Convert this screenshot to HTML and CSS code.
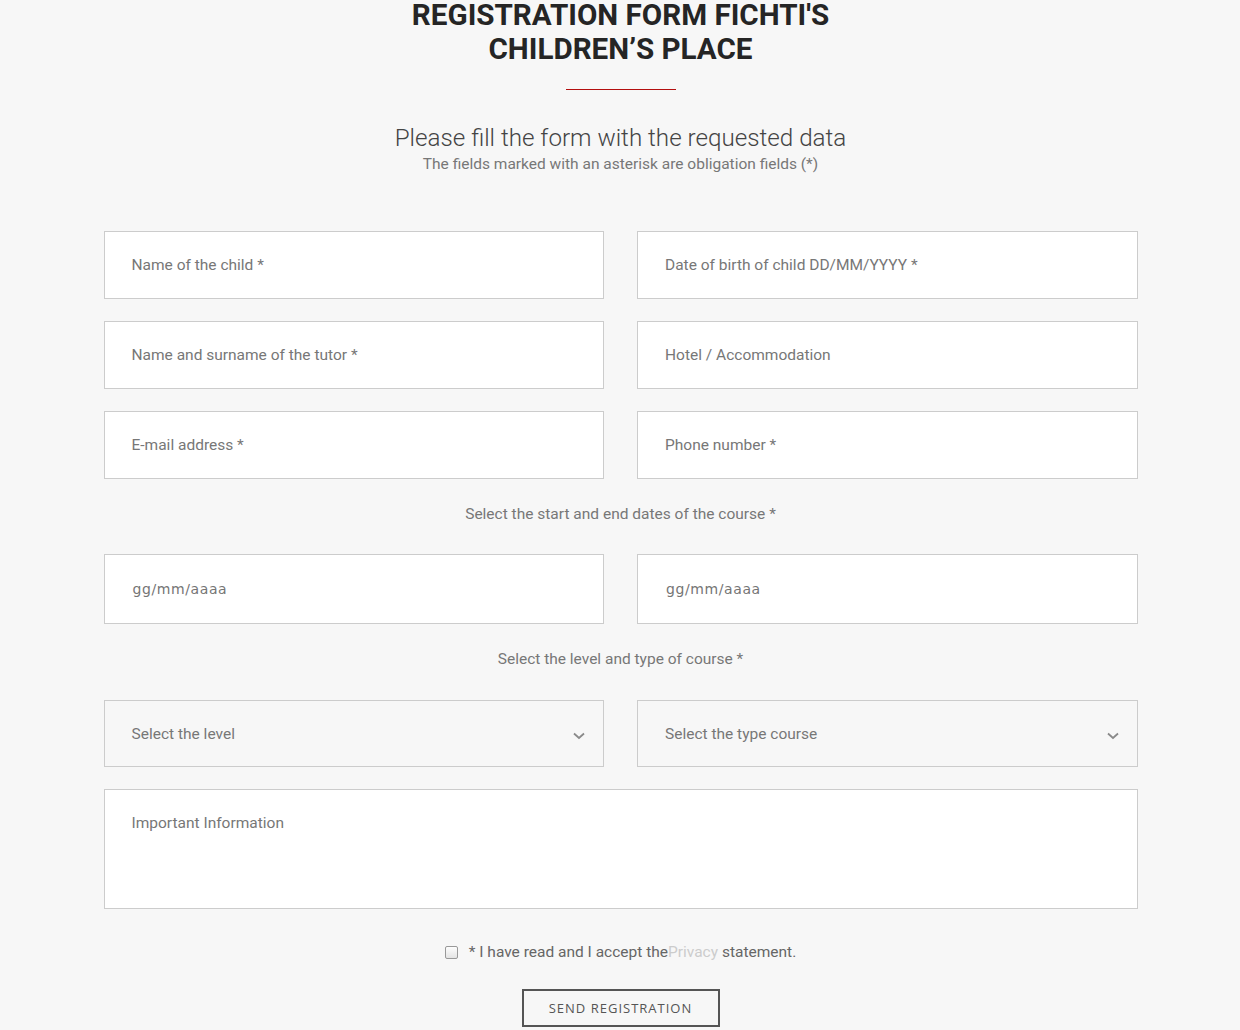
FILE: index.html
```html
<!DOCTYPE html>
<html lang="en">
<head>
<meta charset="utf-8">
<title>Registration Form</title>
<link rel="stylesheet" href="styles.css">
</head>
<body>
<div class="page">
  <h1 class="title">REGISTRATION FORM FICHTI'S<br>CHILDREN’S PLACE</h1>
  <div class="divider"></div>
  <p class="lead">Please fill the form with the requested data</p>
  <p class="note">The fields marked with an asterisk are obligation fields (*)</p>

  <form class="form">
    <div class="grid">
      <div class="field"><span>Name of the child *</span></div>
      <div class="field"><span>Date of birth of child DD/MM/YYYY *</span></div>
      <div class="field"><span>Name and surname of the tutor *</span></div>
      <div class="field"><span>Hotel / Accommodation</span></div>
      <div class="field"><span>E-mail address *</span></div>
      <div class="field"><span>Phone number *</span></div>
    </div>

    <p class="label first">Select the start and end dates of the course *</p>
    <div class="grid">
      <div class="field date"><span>gg/mm/aaaa</span></div>
      <div class="field date"><span>gg/mm/aaaa</span></div>
    </div>

    <p class="label">Select the level and type of course *</p>
    <div class="grid">
      <div class="field select"><span>Select the level</span>
        <svg class="chev" width="12" height="8" viewBox="0 0 12 8"><path d="M1 1.5 L6 6 L11 1.5" fill="none" stroke="#8a8a8a" stroke-width="1.8"/></svg>
      </div>
      <div class="field select"><span>Select the type course</span>
        <svg class="chev" width="12" height="8" viewBox="0 0 12 8"><path d="M1 1.5 L6 6 L11 1.5" fill="none" stroke="#8a8a8a" stroke-width="1.8"/></svg>
      </div>
    </div>

    <div class="field area"><span>Important Information</span></div>

    <div class="consent">
      <span class="box"></span>
      <span>* I have read and I accept the<span class="privacy">Privacy</span> statement.</span>
    </div>

    <div class="actions">
      <span class="btn">SEND REGISTRATION</span>
    </div>
  </form>
</div>
</body>
</html>
```

FILE: styles.css
```css
html, body {
  margin: 0;
  padding: 0;
  background: #f7f7f7;
}
body {
  font-family: Roboto, "Liberation Sans", sans-serif;
  color: #777;
}
.page {
  width: 1034px;
  margin: 0 auto;
  padding-left: 1px;
  display: flex;
  flex-direction: column;
  align-items: center;
}
.title {
  margin: -2px 0 0 0;
  font-size: 29.6px;
  line-height: 34px;
  font-weight: 700;
  color: #252525;
  text-align: center;
}
.divider {
  width: 110px;
  height: 1px;
  background: #b30f0f;
  margin-top: 23px;
}
.lead {
  margin: 33px 0 0 0;
  font-size: 24.2px;
  line-height: 30px;
  font-weight: 300;
  color: #444;
}
.note {
  margin: 0;
  font-size: 15.5px;
  line-height: 22px;
  color: #777;
}
.form {
  width: 100%;
  margin-top: 56px;
  display: flex;
  flex-direction: column;
}
.grid {
  display: grid;
  grid-template-columns: 1fr 1fr;
  column-gap: 33px;
  row-gap: 22px;
}
.field {
  box-sizing: border-box;
  height: 68px;
  background: #fff;
  border: 1px solid #ccc;
  padding: 0 27px;
  display: flex;
  align-items: center;
  font-size: 15.5px;
  color: #777;
}
.field.date {
  height: 70px;
  padding-left: 28px;
  font-family: "DejaVu Sans", sans-serif;
  font-size: 14px;
  color: #757575;
  letter-spacing: 0.6px;
}
.label {
  box-sizing: border-box;
  margin: 0;
  height: 76px;
  padding-bottom: 6px;
  display: flex;
  align-items: center;
  justify-content: center;
  font-size: 15.5px;
  color: #777;
}
.label.first {
  height: 75px;
  padding-bottom: 5px;
}
.field.select {
  height: 67px;
  background: #f7f7f7;
  justify-content: space-between;
  padding-right: 18px;
}
.chev {
  margin-top: 4px;
}
.field.area {
  margin-top: 22px;
  height: 120px;
  align-items: flex-start;
  padding-top: 24px;
}
.consent {
  margin-top: 34px;
  display: flex;
  align-items: center;
  justify-content: center;
  gap: 11px;
  font-size: 15.5px;
  color: #666;
}
.box {
  width: 11px;
  height: 11px;
  border: 1px solid #999;
  border-radius: 2px;
  background: linear-gradient(#fdfdfd, #e4e4e4);
}
.privacy {
  color: #ccc;
}
.actions {
  margin-top: 28px;
  display: flex;
  justify-content: center;
}
.btn {
  box-sizing: border-box;
  width: 198px;
  height: 38px;
  border: 2px solid #555;
  display: flex;
  align-items: center;
  justify-content: center;
  font-family: "Open Sans", sans-serif;
  font-size: 13px;
  letter-spacing: 1px;
  color: #555;
}
```
